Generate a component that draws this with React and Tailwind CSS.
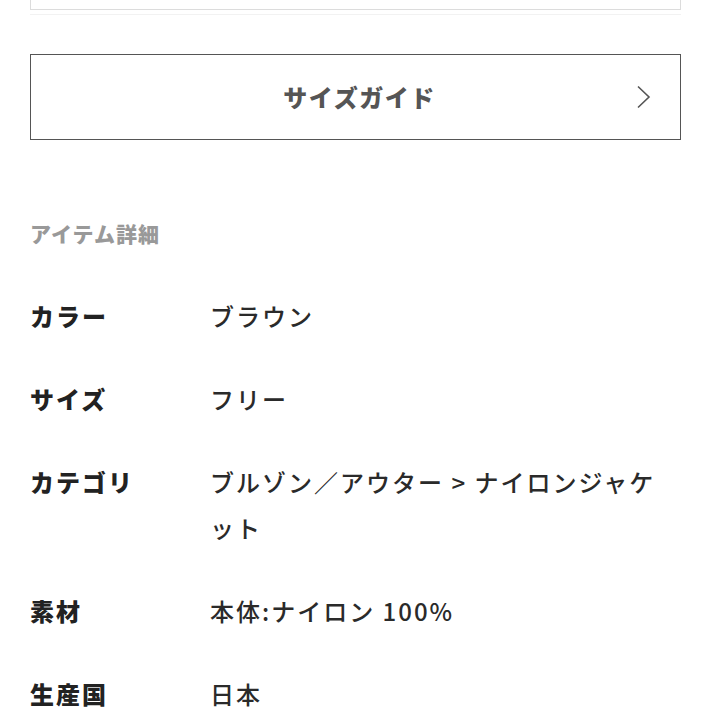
import React from 'react';

const details = [
  { label: 'カラー', value: 'ブラウン' },
  { label: 'サイズ', value: 'フリー' },
  { label: 'カテゴリ', value: 'ブルゾン／アウター > ナイロンジャケット' },
  { label: '素材', value: '本体:ナイロン 100%' },
  { label: '生産国', value: '日本' },
];

const font = { fontFamily: '"Noto Sans CJK JP", "Noto Sans", sans-serif' };

const App = () => {
  return (
    <div className="w-[711px] h-[711px] overflow-hidden bg-white px-[30px]" style={font}>
      {/* bottom of the box above, scrolled off */}
      <div className="h-[10px] border-x border-b border-[#dcdcdc]" />
      <div className="h-px bg-[#f2f2f2] mt-[4px]" />

      <button className="mt-[39px] w-full h-[86px] border-[1.5px] border-[#555] flex items-center justify-center relative bg-white">
        <span className="pl-[8px] text-[24px] font-black tracking-[1.5px] text-[#555]">サイズガイド</span>
        <svg className="absolute right-[28px] top-1/2 -translate-y-1/2" width="16" height="24" viewBox="0 0 16 24" fill="none">
          <path d="M2 1.5 L13 12 L2 22.5" stroke="#555" strokeWidth="1.6" />
        </svg>
      </button>

      <h2 className="mt-[79px] text-[21px] leading-[28px] font-black tracking-[1px] text-[#999]">アイテム詳細</h2>

      <dl className="mt-[46px] flex flex-col gap-[37px]">
        {details.map((d) => (
          <div key={d.label} className="flex text-[24px] leading-[46px] tracking-[2px]">
            <dt className="w-[180px] shrink-0 font-black text-[#222]">{d.label}</dt>
            <dd className="w-[452px] font-medium text-[#2a2a2a]">{d.value}</dd>
          </div>
        ))}
      </dl>
    </div>
  );
};

export default App;
